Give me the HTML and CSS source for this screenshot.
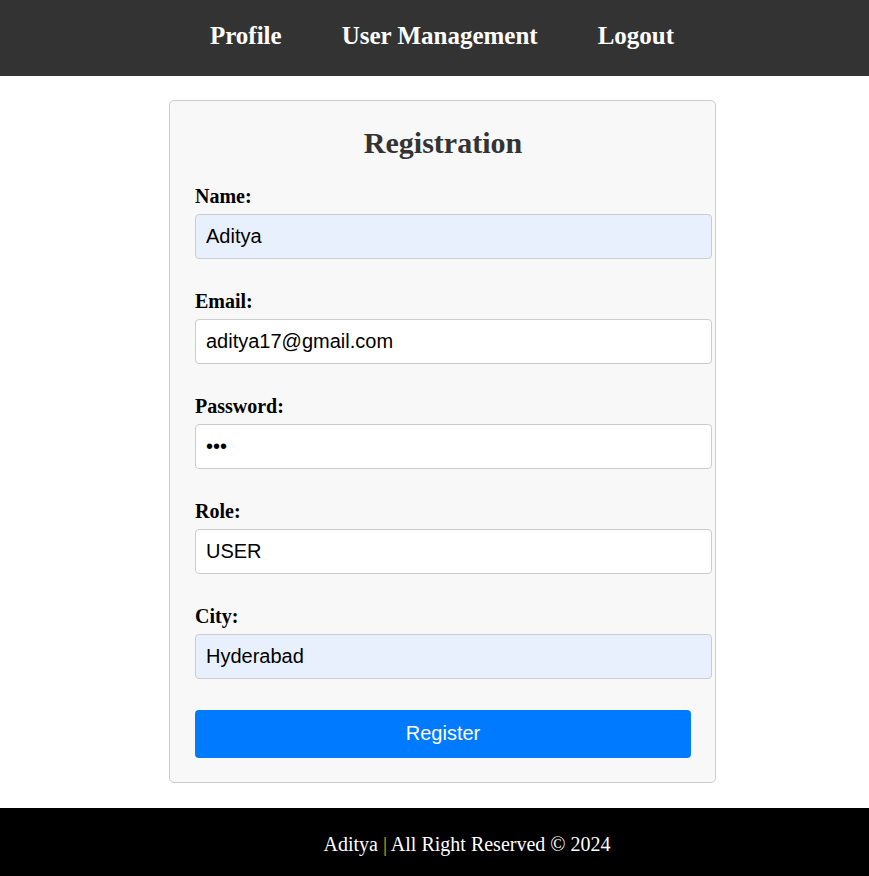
FILE: index.html
```html
<!DOCTYPE html>
<html>
<head>
<meta charset="utf-8">
<title>Registration</title>
<link rel="stylesheet" href="styles.css">
</head>
<body>
<nav class="nav">
  <a class="nav-link" href="#">Profile</a>
  <a class="nav-link" href="#">User Management</a>
  <a class="nav-link" href="#">Logout</a>
</nav>
<main class="main">
  <div class="card">
    <h2 class="title">Registration</h2>
    <form class="form">
      <div class="group">
        <label class="label">Name:</label>
        <input class="input autofill" type="text" value="Aditya">
      </div>
      <div class="group">
        <label class="label">Email:</label>
        <input class="input" type="text" value="aditya17@gmail.com">
      </div>
      <div class="group">
        <label class="label">Password:</label>
        <input class="input" type="password" value="abc">
      </div>
      <div class="group">
        <label class="label">Role:</label>
        <input class="input" type="text" value="USER">
      </div>
      <div class="group">
        <label class="label">City:</label>
        <input class="input autofill" type="text" value="Hyderabad">
      </div>
      <button class="btn" type="button">Register</button>
    </form>
  </div>
</main>
<footer class="footer">
  <p class="footer-text">Aditya <span class="pipe">|</span> All Right Reserved © 2024</p>
</footer>
</body>
</html>
```
FILE: styles.css
```css
* { box-sizing: border-box; }
html, body { margin: 0; padding: 0; }
body {
  background: #fff;
  font-family: "Liberation Serif", "Times New Roman", serif;
  color: #000;
}
.nav {
  height: 76px;
  background: #333;
  display: flex;
  justify-content: center;
  align-items: flex-start;
  gap: 60px;
  padding: 22px 0 0 15px;
}
.nav-link {
  color: #fff;
  text-decoration: none;
  font-weight: bold;
  font-size: 25px;
  line-height: 28.75px;
}
.main {
  padding: 24px 0 0 16px;
}
.card {
  width: 547px;
  margin: 0 auto;
  background: #f8f8f8;
  border: 1px solid #ccc;
  border-radius: 5px;
  padding: 25px 24px 24px 25px;
}
.title {
  margin: 0 0 24px 0;
  text-align: center;
  font-size: 30px;
  line-height: 34.5px;
  color: #333;
  font-weight: bold;
}
.form { margin: 0; }
.group { margin-bottom: 31px; }
.label {
  display: block;
  font-weight: bold;
  font-size: 20px;
  line-height: 23px;
  margin-bottom: 6px;
}
.input {
  box-sizing: content-box;
  display: block;
  width: calc(100% - 1px);
  height: 23px;
  padding: 10px;
  margin: 0;
  border: 1px solid #ccc;
  border-radius: 4px;
  background: #fff;
  font-family: "Liberation Sans", Arial, sans-serif;
  font-size: 20px;
  color: #000;
  outline: none;
}
.input.autofill { background: #e8f0fe; }
.btn {
  display: block;
  width: 100%;
  height: 48px;
  border: none;
  border-radius: 4px;
  background: #007bff;
  color: #fff;
  font-family: "Liberation Sans", Arial, sans-serif;
  font-size: 20px;
  padding: 0;
  cursor: pointer;
}
.footer {
  margin-top: 25px;
  background: #000;
  color: #fff;
  padding: 25px 0 25px 65px;
  text-align: center;
}
.footer-text {
  margin: 0;
  font-size: 20px;
  line-height: 23px;
}
.pipe { color: #ffa500; }
```
